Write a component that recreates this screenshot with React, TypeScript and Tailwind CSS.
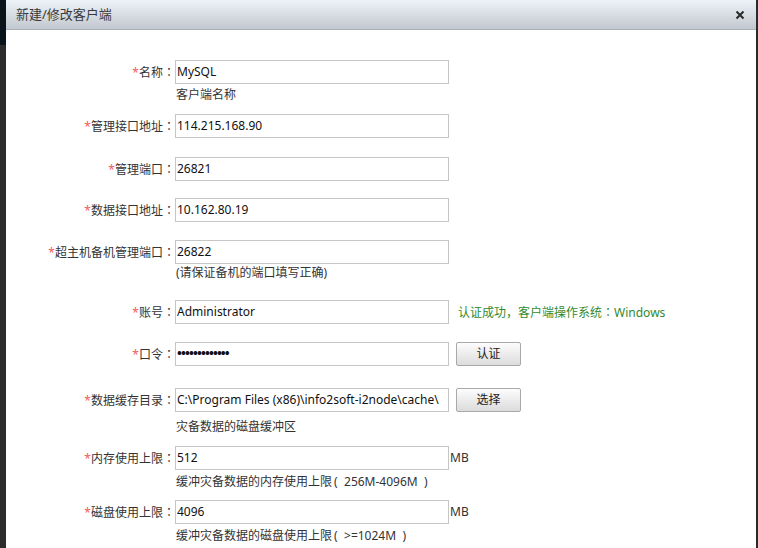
import React from "react";

const font = { fontFamily: '"Noto Sans", "Noto Sans CJK SC", sans-serif' };
const jp = { fontFamily: '"Noto Sans CJK JP", sans-serif' };

function Label({ text }: { text: string }) {
  return (
    <div className="w-[169px] shrink-0 text-right text-[12px] text-[#333] whitespace-nowrap">
      <span className="text-[#f45c5c]">*</span>
      {text}
      <span style={jp}>：</span>
    </div>
  );
}

function Field({ value, password }: { value: string; password?: boolean }) {
  return (
    <div className="w-[274px] h-[24px] shrink-0 border border-[#c6c6c6] bg-white flex items-center pl-[1px] text-[12px] text-[#111] whitespace-nowrap overflow-hidden">
      {password ? <span className="text-[13px] tracking-[-0.9px] font-bold">•••••••••••••</span> : value}
    </div>
  );
}

function Btn({ text }: { text: string }) {
  return (
    <button className="ml-[7px] w-[65px] h-[24px] border border-[#a9a9a9] rounded-[2px] bg-gradient-to-b from-[#fdfdfd] to-[#dcdcdc] text-[12px] text-[#222]">
      {text}
    </button>
  );
}

function Hint({ children, mt }: { children: React.ReactNode; mt: string }) {
  return <div className={`pl-[170px] text-[12px] leading-[16px] text-[#333] whitespace-nowrap ${mt}`}>{children}</div>;
}

function Open() {
  return <span className="inline-block w-[12px] text-left pl-[2px]">(</span>;
}

function Close() {
  return <span className="inline-block w-[12px] text-right pr-[2px]">)</span>;
}

export default function App() {
  return (
    <div className="w-[758px] h-[548px] flex bg-[#2b2b2b] overflow-hidden" style={font}>
      <div className="w-[6px] shrink-0 flex flex-col">
        <div className="h-[45px] bg-[#081419]" />
        <div className="flex-1 bg-[#2c2c2c]" />
      </div>

      <div className="w-[750px] shrink-0 bg-white flex flex-col">
        {/* title bar */}
        <div className="h-[30px] shrink-0 bg-gradient-to-b from-[#edf3f7] to-[#c2c8cf] border-b border-[#a9b0b7] flex items-center justify-between pl-[10px] pr-[10px]">
          <span className="text-[13px] text-[#3a3a3a]">新建/修改客户端</span>
          <svg width="10" height="10" viewBox="0 0 10 10" className="mr-[1px]">
            <path d="M1.5 1.5 L8.5 8.5 M8.5 1.5 L1.5 8.5" stroke="#2a2a2a" strokeWidth="2" />
          </svg>
        </div>

        {/* form */}
        <div className="pt-[30px]">
          <div className="flex items-center">
            <Label text="名称" />
            <Field value="MySQL" />
          </div>
          <Hint mt="mt-[3px]">客户端名称</Hint>

          <div className="flex items-center mt-[11px]">
            <Label text="管理接口地址" />
            <Field value="114.215.168.90" />
          </div>

          <div className="flex items-center mt-[19px]">
            <Label text="管理端口" />
            <Field value="26821" />
          </div>

          <div className="flex items-center mt-[17px]">
            <Label text="数据接口地址" />
            <Field value="10.162.80.19" />
          </div>

          <div className="flex items-center mt-[18px]">
            <Label text="超主机备机管理端口" />
            <Field value="26822" />
          </div>
          <Hint mt="mt-[1px]">(请保证备机的端口填写正确)</Hint>

          <div className="flex items-center mt-[19px]">
            <Label text="账号" />
            <Field value="Administrator" />
            <span className="ml-[9px] text-[12px] text-[#2f8a2f] whitespace-nowrap">
              认证成功<span style={jp}>，</span>客户端操作系统<span style={jp}>：</span>Windows
            </span>
          </div>

          <div className="flex items-center mt-[18px]">
            <Label text="口令" />
            <Field value="" password />
            <Btn text="认证" />
          </div>

          <div className="flex items-center mt-[22px]">
            <Label text="数据缓存目录" />
            <Field value="C:\Program Files (x86)\info2soft-i2node\cache\" />
            <Btn text="选择" />
          </div>
          <Hint mt="mt-[7px]">灾备数据的磁盘缓冲区</Hint>

          <div className="flex items-center mt-[11px]">
            <Label text="内存使用上限" />
            <Field value="512" />
            <span className="ml-[1px] text-[12px] text-[#333]">MB</span>
          </div>
          <Hint mt="mt-[4px]">
            缓冲灾备数据的内存使用上限<Open />256M-4096M<Close />
          </Hint>

          <div className="flex items-center mt-[10px]">
            <Label text="磁盘使用上限" />
            <Field value="4096" />
            <span className="ml-[1px] text-[12px] text-[#333]">MB</span>
          </div>
          <Hint mt="mt-[4px]">
            缓冲灾备数据的磁盘使用上限<Open />&gt;=1024M<Close />
          </Hint>
        </div>
      </div>

      <div className="w-[2px] shrink-0 bg-[#2a2a2a]" />
    </div>
  );
}
